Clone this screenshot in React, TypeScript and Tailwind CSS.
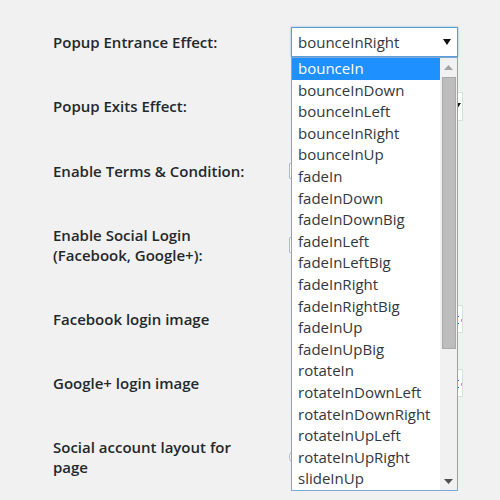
import React from "react";

const effects = [
  "bounceIn",
  "bounceInDown",
  "bounceInLeft",
  "bounceInRight",
  "bounceInUp",
  "fadeIn",
  "fadeInDown",
  "fadeInDownBig",
  "fadeInLeft",
  "fadeInLeftBig",
  "fadeInRight",
  "fadeInRightBig",
  "fadeInUp",
  "fadeInUpBig",
  "rotateIn",
  "rotateInDownLeft",
  "rotateInDownRight",
  "rotateInUpLeft",
  "rotateInUpRight",
  "slideInUp",
];

function Arrow({ className = "" }: { className?: string }) {
  return (
    <svg width="8" height="6" viewBox="0 0 8 6" className={className}>
      <path d="M0 0h8L4 6z" fill="#111" />
    </svg>
  );
}

function Label({ children }: { children: React.ReactNode }) {
  return <div className="w-[236px] text-[15px] font-semibold leading-[20px] text-[#23282d]">{children}</div>;
}

function EffectSelect() {
  return (
    <div className="relative ml-[2px] w-[167px]">
      <div className="flex h-[30px] items-center justify-between border border-[#5b9dd9] bg-white pl-[6px] pr-[6px] text-[15px] text-[#32373c] shadow-[0_0_2px_rgba(30,140,190,0.5)]">
        <span>bounceInRight</span>
        <Arrow />
      </div>
      <div className="absolute left-0 top-full z-10 flex h-[434px] w-[167px] border border-[#7ea6d6] bg-white">
        <ul className="w-[148px]">
          {effects.map((e, i) => (
            <li
              key={e}
              className={
                i === 0
                  ? "h-[21.6px] bg-[#1e90ff] pl-[6px] text-[15px] leading-[21.6px] text-white"
                  : "h-[21.6px] pl-[6px] text-[15px] leading-[21.6px] text-[#32373c]"
              }
            >
              {e}
            </li>
          ))}
        </ul>
        <div className="flex w-[17px] flex-col items-center bg-[#f1f1f1]">
          <div className="flex h-[18px] items-center justify-center">
            <svg width="9" height="5" viewBox="0 0 9 5">
              <path d="M0 5h9L4.5 0z" fill="#a3a3a3" />
            </svg>
          </div>
          <div className="mt-[1px] h-[272px] w-[14px] border border-[#a9a9a9] bg-[#bdbdbd]" />
          <div className="flex-1" />
          <div className="flex h-[18px] items-center justify-center">
            <svg width="9" height="5" viewBox="0 0 9 5">
              <path d="M0 0h9L4.5 5z" fill="#505050" />
            </svg>
          </div>
        </div>
      </div>
    </div>
  );
}

function Checkbox() {
  return <div className="h-[16px] w-[16px] rounded-[1px] border border-[#b4b9be] bg-white" />;
}

function UploadField() {
  return (
    <div className="relative ml-[2px] h-[28px] w-[172px] border border-[#ddd] bg-white">
      <div className="absolute right-[3px] top-[10px] h-[1px] w-[2px] bg-[#2271b1]" />
      <div className="absolute right-[3px] top-[17px] h-[1px] w-[2px] bg-[#2271b1]" />
      <div className="absolute right-0 top-[13px] h-[3px] w-[1px] bg-[#f0a040]" />
    </div>
  );
}

export default function App() {
  return (
    <div
      className="h-[500px] w-[500px] overflow-hidden bg-[#f1f1f1]"
      style={{ fontFamily: '"Open Sans", "Noto Sans", sans-serif' }}
    >
      <div className="flex flex-col pl-[53px] pt-[10px]">
        <div className="flex h-[64px] items-center">
          <Label>Popup Entrance Effect:</Label>
          <EffectSelect />
        </div>
        <div className="flex h-[64px] items-center">
          <Label>Popup Exits Effect:</Label>
          <div className="ml-[2px] flex h-[29px] w-[172px] items-center justify-end border border-[#ddd] bg-white pr-[1px]">
            <Arrow />
          </div>
        </div>
        <div className="flex h-[65px] items-center">
          <Label>Enable Terms &amp; Condition:</Label>
          <Checkbox />
        </div>
        <div className="flex h-[84px] items-center">
          <Label>
            Enable Social Login
            <br />
            (Facebook, Google+):
          </Label>
          <Checkbox />
        </div>
        <div className="flex h-[64px] items-center">
          <Label>Facebook login image</Label>
          <UploadField />
        </div>
        <div className="flex h-[64px] items-center">
          <Label>Google+ login image</Label>
          <UploadField />
        </div>
        <div className="flex h-[84px] items-center">
          <Label>
            Social account layout for
            <br />
            page
          </Label>
          <div className="h-[16px] w-[16px] rounded-full border border-[#b4b9be] bg-white" />
        </div>
      </div>
    </div>
  );
}
